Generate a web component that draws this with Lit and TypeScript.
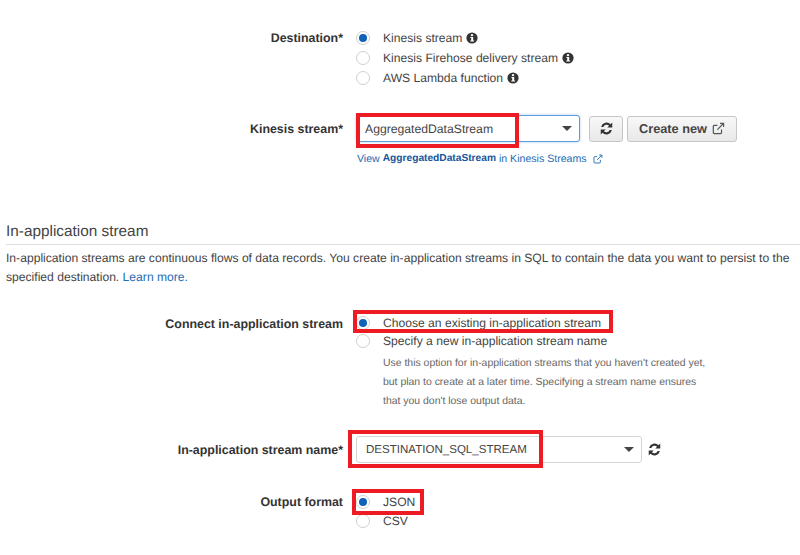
import { LitElement, html, css } from "lit";
import { customElement } from "lit/decorators.js";

const info = html`<svg class="info" viewBox="0 0 12 12"><circle cx="6" cy="6" r="5.6" fill="#333"/><rect x="4.9" y="2.2" width="2.2" height="1.9" fill="#fff"/><path d="M4.4 5h2.8v3.6h.9v1H4.3v-1h.9V6h-.8z" fill="#fff"/></svg>`;
const ext = html`<svg class="ext" viewBox="0 0 12 12" fill="none" stroke="currentColor" stroke-width="1.1"><path d="M8.8 7v2.8a1 1 0 0 1-1 1H2.2a1 1 0 0 1-1-1V4.2a1 1 0 0 1 1-1H5"/><path d="M5 7l5.3-5.4M7.4 1.2h3.3v3.3"/></svg>`;
const refresh = html`<svg class="refresh" viewBox="0 0 14 14" fill="#333"><path d="M13.2 .6v5.4H7.8l2-2A3.8 3.8 0 0 0 3.6 5.3H1.2A6 6 0 0 1 11.4 2.4z"/><path d="M.8 13.4V8h5.4l-2 2a3.8 3.8 0 0 0 6.2-1.3h2.4A6 6 0 0 1 2.6 11.6z"/></svg>`;
const radio = (on: boolean) => html`<span class="radio ${on ? "on" : ""}"></span>`;

@customElement("app-root")
export class AppRoot extends LitElement {
  static styles = css`
    :host { display: block; width: 800px; height: 555px; overflow: hidden; background: #fff; color: #444; font-family: "Liberation Sans", Arial, sans-serif; font-size: 12.12px; text-rendering: geometricPrecision; }
    .page { position: relative; width: 800px; height: 555px; }
    .top { padding: 28px 0 0 6px; display: flex; flex-direction: column; }
    .row { display: flex; align-items: flex-start; }
    .lab { width: 351px; text-align: right; font-weight: 700; color: #333; font-size: 12.4px; line-height: 20px; flex: none; padding-right: 14px; box-sizing: border-box; }
    .opts { display: flex; flex-direction: column; position: relative; }
    .opt { display: flex; align-items: center; height: 20px; color: #444; position: relative; }
    .radio { width: 12px; height: 12px; border: 1px solid #d0d0d0; border-radius: 50%; margin: 0 13px 0 -1px; flex: none; position: relative; background: #fff; }
    .radio.on::after { content: ""; position: absolute; left: 2px; top: 2px; width: 8px; height: 8px; border-radius: 50%; background: #0f62b8; }
    .info { width: 12px; height: 12px; margin-left: 4px; }
    .stream { margin-top: 27px; align-items: center; height: 27px; }
    .select { position: relative; display: flex; align-items: center; box-sizing: border-box; background: #fff; border-radius: 3px; height: 27px; color: #444; padding-left: 8px; margin-left: -1px; }
    .select.focus { width: 224px; border: 1px solid #5b9dd9; box-shadow: 0 0 3px #a9cdeb; font-size: 12.2px; }
    .select.plain { width: 286px; border: 1px solid #d5d5d5; font-size: 11.55px; padding-left: 9px; }
    .caret { position: absolute; right: 7px; top: 10px; width: 0; height: 0; border-left: 5px solid transparent; border-right: 5px solid transparent; border-top: 5px solid #444; }
    .btn { display: flex; align-items: center; justify-content: center; box-sizing: border-box; height: 26px; border: 1px solid #c6c6c6; border-radius: 3px; background: linear-gradient(#f8f8f8, #e8e8e8); font-weight: 700; color: #444; font-size: 12.75px; }
    .btn.icon { width: 34px; margin-left: 9px; }
    .btn.new { width: 110px; margin-left: 4px; }
    .refresh { width: 13px; height: 13px; }
    .btn .ext { width: 13px; height: 13px; margin-left: 5px; color: #555; }
    .link { margin: 10px 0 0 351px; font-size: 10.6px; line-height: 14px; color: #1f6bb5; display: flex; align-items: center; }
    .link b { font-weight: 700; color: #14559b; font-size: 10.2px; }
    .link .ext { width: 10px; height: 10px; margin-left: 6px; }
    .section { margin: 56px 0 0 6px; }
    h2 { margin: 0; font-size: 15.35px; font-weight: 400; color: #444; line-height: 20px; padding-bottom: 2px; border-bottom: 1px solid #ddd; }
    p { margin: 4px 0 0; font-size: 12.14px; line-height: 19px; color: #444; width: 794px; }
    a { color: #1f6bb5; }
    .connect { margin: 27px 0 0 6px; }
    .connect .opt { height: 18px; }
    .help { margin: 4px 0 0 26px; font-size: 10.45px; line-height: 19px; color: #666; width: 325px; }
    .name { margin: 25px 0 0 6px; align-items: center; height: 27px; }
    .plainr { width: 13px; height: 13px; margin-left: 6px; }
    .format { margin: 29px 0 0 6px; }
    .format .opt { height: 19px; }
    .hl { position: absolute; border: 4px solid #ed1c24; box-sizing: border-box; pointer-events: none; }
  `;

  render() {
    return html`<div class="page">
      <div class="top">
        <div class="row">
          <div class="lab">Destination*</div>
          <div class="opts">
            <div class="opt">${radio(true)}Kinesis stream${info}</div>
            <div class="opt">${radio(false)}Kinesis Firehose delivery stream${info}</div>
            <div class="opt">${radio(false)}AWS Lambda function${info}</div>
          </div>
        </div>
        <div class="row stream">
          <div class="lab">Kinesis stream*</div>
          <div class="select focus">AggregatedDataStream<span class="caret"></span></div>
          <div class="btn icon">${refresh}</div>
          <div class="btn new">Create new${ext}</div>
        </div>
        <div class="link">View&nbsp;<b>AggregatedDataStream</b>&nbsp;in Kinesis Streams${ext}</div>
      </div>
      <div class="section">
        <h2>In-application stream</h2>
        <p>In-application streams are continuous flows of data records. You create in-application streams in SQL to contain the data you want to persist to the specified destination. <a>Learn more.</a></p>
      </div>
      <div class="row connect">
        <div class="lab">Connect in-application stream</div>
        <div class="opts">
          <div class="opt">${radio(true)}Choose an existing in-application stream</div>
          <div class="opt">${radio(false)}Specify a new in-application stream name</div>
          <div class="help">Use this option for in-application streams that you haven't created yet, but plan to create at a later time. Specifying a stream name ensures that you don't lose output data.</div>
        </div>
      </div>
      <div class="row name">
        <div class="lab">In-application stream name*</div>
        <div class="select plain">DESTINATION_SQL_STREAM<span class="caret"></span></div>
        <span class="plainr">${refresh}</span>
      </div>
      <div class="row format">
        <div class="lab">Output format</div>
        <div class="opts">
          <div class="opt">${radio(true)}JSON</div>
          <div class="opt">${radio(false)}CSV</div>
        </div>
      </div>
      <div class="hl" style="left:356px;top:113px;width:163px;height:35px"></div>
      <div class="hl" style="left:353px;top:310px;width:260px;height:23px"></div>
      <div class="hl" style="left:348px;top:430px;width:195px;height:38px"></div>
      <div class="hl" style="left:352px;top:489px;width:72px;height:26px"></div>
    </div>`;
  }
}
